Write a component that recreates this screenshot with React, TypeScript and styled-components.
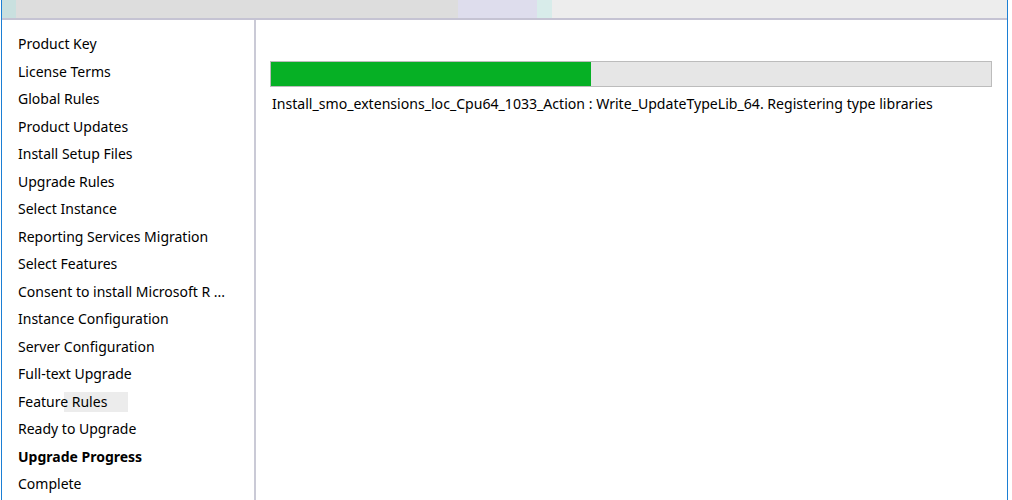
import React from "react";
import styled, { createGlobalStyle } from "styled-components";

const Global = createGlobalStyle`
  html, body { margin: 0; padding: 0; background: #ffffff; }
  #root { width: 1012px; height: 500px; overflow: hidden; }
`;

const Page = styled.div`
  width: 1012px;
  height: 500px;
  background: #ffffff;
  overflow: hidden;
  font-family: "Segoe UI", "Noto Sans", "Open Sans", sans-serif;
  color: #000000;
`;

const Window = styled.div`
  margin-left: 1px;
  width: 1007px;
  height: 500px;
  box-sizing: border-box;
  border-left: 1px solid #1c7fd4;
  border-right: 1px solid #1c7fd4;
  display: flex;
  flex-direction: column;
`;

const TopBar = styled.div`
  height: 18px;
  flex: none;
  display: flex;
  border-bottom: 2px solid #c5c3d3;
`;

const Segment = styled.div<{ $w?: number; $bg: string }>`
  flex: ${(p) => (p.$w ? `0 0 ${p.$w}px` : "1 1 auto")};
  background: ${(p) => p.$bg};
`;

const Body = styled.div`
  flex: 1;
  display: flex;
  min-height: 0;
`;

const Sidebar = styled.nav`
  width: 254px;
  flex: none;
  border-right: 2px solid #cacad6;
  padding: 10px 0 0 16px;
  box-sizing: border-box;
  position: relative;
`;

const NavItem = styled.div<{ $active?: boolean }>`
  height: 27.5px;
  display: flex;
  align-items: center;
  font-size: 14px;
  font-weight: ${(p) => (p.$active ? 700 : 400)};
  white-space: nowrap;
  position: relative;
`;

const Smudge = styled.span`
  position: absolute;
  left: 46px;
  top: 4px;
  width: 64px;
  height: 20px;
  background: #ececec;
  z-index: 0;
`;

const Label = styled.span`
  position: relative;
  z-index: 1;
`;

const Content = styled.section`
  flex: 1;
  padding: 41px 0 0 14px;
`;

const Progress = styled.div`
  width: 722px;
  height: 26px;
  box-sizing: border-box;
  border: 1px solid #bcbcbc;
  background: #e6e6e6;
`;

const Fill = styled.div`
  height: 100%;
  background: #06b025;
`;

const Status = styled.div`
  margin-top: 7px;
  padding-left: 2px;
  font-size: 14.1px;
  white-space: nowrap;
`;

const items = [
  "Product Key",
  "License Terms",
  "Global Rules",
  "Product Updates",
  "Install Setup Files",
  "Upgrade Rules",
  "Select Instance",
  "Reporting Services Migration",
  "Select Features",
  "Consent to install Microsoft R ...",
  "Instance Configuration",
  "Server Configuration",
  "Full-text Upgrade",
  "Feature Rules",
  "Ready to Upgrade",
  "Upgrade Progress",
  "Complete",
];

export default function App() {
  const pct = 44.4;
  return (
    <Page>
      <Global />
      <Window>
        <TopBar>
          <Segment $w={14} $bg="#c9e0df" />
          <Segment $w={442} $bg="#dddddd" />
          <Segment $w={79} $bg="#dedded" />
          <Segment $w={15} $bg="#d8ecea" />
          <Segment $bg="#ededed" />
        </TopBar>
        <Body>
          <Sidebar>
            {items.map((it) => (
              <NavItem key={it} $active={it === "Upgrade Progress"}>
                {it === "Feature Rules" && <Smudge />}
                <Label>{it}</Label>
              </NavItem>
            ))}
          </Sidebar>
          <Content>
            <Progress>
              <Fill style={{ width: `${pct}%` }} />
            </Progress>
            <Status>
              Install_smo_extensions_loc_Cpu64_1033_Action : Write_UpdateTypeLib_64. Registering type libraries
            </Status>
          </Content>
        </Body>
      </Window>
    </Page>
  );
}
